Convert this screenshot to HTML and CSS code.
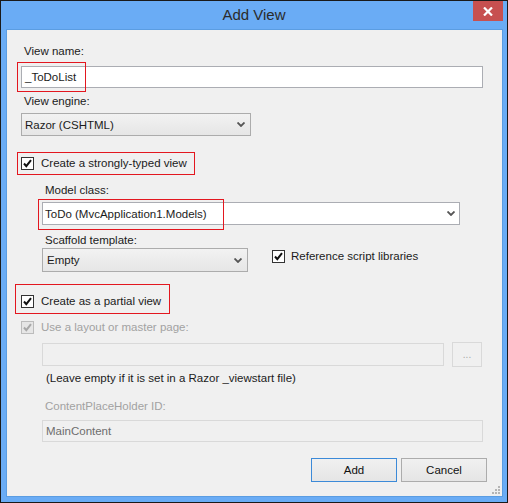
FILE: index.html
```html
<!DOCTYPE html>
<html lang="en">
<head>
  <meta charset="UTF-8">
  <title>Add View</title>
  <link rel="stylesheet" href="styles.css">
</head>
<body>

  <div class="window">
    <div class="titlebar">
      <span class="title">Add View</span>
      <span class="close">
        <svg width="10" height="9" viewBox="0 0 10 9"><path d="M1 0.5 L9 8.5 M9 0.5 L1 8.5" stroke="#fff" stroke-width="2.2"/></svg>
      </span>
    </div>

    <div class="panel">
      <div class="label label-first">View name:</div>
      <div class="field field-full field-white has-mark">
        <span class="value">_ToDoList</span>
        <span class="mark mark-name"></span>
      </div>

      <div class="label label-engine">View engine:</div>
      <div class="combo combo-engine">
        <span class="value">Razor (CSHTML)</span>
        <svg class="chev" width="8" height="5" viewBox="0 0 8 5"><path d="M0.5 0.5 L4 4 L7.5 0.5" fill="none" stroke="#555" stroke-width="1.8"/></svg>
      </div>

      <div class="boxed boxed-typed">
        <span class="check">
          <svg width="11" height="11" viewBox="0 0 11 11"><path d="M2 5.5 L4.3 8.2 L9 2.2" fill="none" stroke="#111" stroke-width="2"/></svg>
        </span>
        <span>Create a strongly-typed view</span>
      </div>

      <div class="indent">
        <div class="label label-model">Model class:</div>
        <div class="field field-white field-model has-mark">
          <span class="value value-model">ToDo (MvcApplication1.Models)</span>
          <svg class="chev" width="8" height="5" viewBox="0 0 8 5"><path d="M0.5 0.5 L4 4 L7.5 0.5" fill="none" stroke="#555" stroke-width="1.8"/></svg>
          <span class="mark mark-model"></span>
        </div>

        <div class="label label-scaffold">Scaffold template:</div>
        <div class="scaffold-row">
          <div class="combo combo-scaffold">
            <span class="value value-empty">Empty</span>
            <svg class="chev" width="8" height="5" viewBox="0 0 8 5"><path d="M0.5 0.5 L4 4 L7.5 0.5" fill="none" stroke="#555" stroke-width="1.8"/></svg>
          </div>
          <div class="check-row check-ref">
            <span class="check">
              <svg width="11" height="11" viewBox="0 0 11 11"><path d="M2 5.5 L4.3 8.2 L9 2.2" fill="none" stroke="#111" stroke-width="2"/></svg>
            </span>
            <span>Reference script libraries</span>
          </div>
        </div>
      </div>

      <div class="boxed boxed-partial">
        <span class="check">
          <svg width="11" height="11" viewBox="0 0 11 11"><path d="M2 5.5 L4.3 8.2 L9 2.2" fill="none" stroke="#111" stroke-width="2"/></svg>
        </span>
        <span>Create as a partial view</span>
      </div>

      <div class="check-row check-layout disabled">
        <span class="check check-disabled">
          <svg width="11" height="11" viewBox="0 0 11 11"><path d="M2 5.5 L4.3 8.2 L9 2.2" fill="none" stroke="#a8a8a8" stroke-width="2"/></svg>
        </span>
        <span>Use a layout or master page:</span>
      </div>

      <div class="indent">
        <div class="layout-row">
          <div class="field field-disabled field-layout"></div>
          <div class="browse">...</div>
        </div>
        <div class="label label-hint">(Leave empty if it is set in a Razor _viewstart file)</div>

        <div class="label label-placeholder disabled">ContentPlaceHolder ID:</div>
        <div class="field field-disabled field-main">
          <span class="value value-main">MainContent</span>
        </div>
      </div>

      <div class="buttons">
        <div class="btn btn-default">Add</div>
        <div class="btn">Cancel</div>
      </div>

      <svg class="grip" width="9" height="9" viewBox="0 0 9 9">
        <rect x="6" y="0" width="2" height="2" fill="#b5b5b5"/>
        <rect x="3" y="3" width="2" height="2" fill="#b5b5b5"/>
        <rect x="6" y="3" width="2" height="2" fill="#b5b5b5"/>
        <rect x="0" y="6" width="2" height="2" fill="#b5b5b5"/>
        <rect x="3" y="6" width="2" height="2" fill="#b5b5b5"/>
        <rect x="6" y="6" width="2" height="2" fill="#b5b5b5"/>
      </svg>
    </div>
  </div>

</body>
</html>
```

FILE: styles.css
```css
body {
  margin: 0;
  font-family: "Liberation Sans", Arial, sans-serif;
  font-size: 11.5px;
  color: #1b1b1b;
  background: #fff;
}

.window {
  width: 508px;
  height: 503px;
  box-sizing: border-box;
  border: 1px solid #1a1a1a;
  background: #6aacf5;
  display: flex;
  flex-direction: column;
}

.titlebar {
  height: 28px;
  position: relative;
  display: flex;
  align-items: center;
  justify-content: center;
}

.title {
  font-size: 15px;
  color: #2b2b2b;
  margin-top: -2px;
}

.close {
  position: absolute;
  top: 0;
  right: 4px;
  width: 30px;
  height: 20px;
  background: #c75050;
  display: flex;
  align-items: center;
  justify-content: center;
}

.panel {
  flex: 1;
  margin: 0 4px 5px 5px;
  border: 1px solid #5b9de2;
  background: #f0f0f0;
  padding: 0 19px 0 14px;
  position: relative;
}

.label {
  height: 16px;
  line-height: 16px;
  padding-left: 3px;
}

.label-first { margin-top: 13px; }
.label-engine { margin-top: 5px; }
.label-model { margin-top: 7px; }
.label-scaffold { margin-top: 7px; }
.label-hint { margin-top: 3px; padding-left: 4px; }
.label-placeholder { margin-top: 12px; }

.disabled {
  color: #a2a2a2;
}

.field, .combo {
  box-sizing: border-box;
  display: flex;
  align-items: center;
  position: relative;
}

.field-white {
  background: #fff;
  border: 1px solid #abadb3;
}

.field-full {
  margin-top: 7px;
  height: 22px;
  width: 462px;
  padding-left: 3px;
}

.combo {
  border: 1px solid #acacac;
  background: linear-gradient(#f2f2f2, #e6e6e6);
  padding-left: 3px;
}

.combo-engine {
  margin-top: 4px;
  width: 230px;
  height: 23px;
}

.chev {
  margin-left: auto;
  margin-right: 5px;
}

.indent {
  margin-left: 21px;
}

.field-model {
  margin-top: 4px;
  width: 418px;
  height: 23px;
  padding-left: 2px;
}

.field-model .chev {
  margin-right: 4px;
}

.scaffold-row {
  display: flex;
  align-items: flex-start;
}

.combo-scaffold {
  width: 206px;
  height: 24px;
  padding-left: 4px;
}

.check-ref {
  margin-left: 24px;
  margin-top: 2px;
}

.check-row {
  display: flex;
  align-items: center;
  gap: 6px;
  line-height: 13px;
}

.check {
  width: 13px;
  height: 13px;
  box-sizing: border-box;
  border: 1px solid #333;
  background: #fff;
  display: flex;
  align-items: center;
  justify-content: center;
  flex: none;
}

.check-disabled {
  border-color: #bcbcbc;
  background: #e6e6e6;
}

.check-layout {
  margin-top: 7px;
  gap: 7px;
}

/* red annotation boxes */
.boxed {
  display: flex;
  align-items: flex-start;
  gap: 7px;
  border: 1px solid #e3171f;
  line-height: 13px;
  width: max-content;
}

.boxed-typed {
  margin-top: 16px;
  margin-left: -4px;
  padding: 4px 7px 4px 3px;
}

.boxed-partial {
  margin-top: 12px;
  margin-left: -6px;
  padding: 10px 8px 5px 5px;
}

.mark {
  position: absolute;
  border: 1px solid #e3171f;
  box-sizing: border-box;
}

.mark-name {
  left: -5px;
  top: -5px;
  width: 69px;
  height: 30px;
}

.mark-model {
  left: -5px;
  top: -4px;
  width: 186px;
  height: 31px;
}

.layout-row {
  margin-top: 8px;
  display: flex;
  align-items: center;
  gap: 8px;
}

.field-disabled {
  border: 1px solid #d9d9d9;
  background: #f0f0f0;
}

.field-layout {
  width: 402px;
  height: 23px;
}

.browse {
  width: 30px;
  height: 25px;
  box-sizing: border-box;
  border: 1px solid #d9d9d9;
  color: #a8a8a8;
  font-size: 10px;
  display: flex;
  align-items: center;
  justify-content: center;
}

.field-main {
  margin-top: 6px;
  width: 441px;
  height: 22px;
  padding-left: 3px;
  color: #6d6d6d;
}

.buttons {
  margin-top: 16px;
  margin-right: -4px;
  display: flex;
  justify-content: flex-end;
  gap: 4px;
}

.btn {
  width: 86px;
  height: 24px;
  box-sizing: border-box;
  border: 1px solid #acacac;
  background: linear-gradient(#f0f0f0, #e5e5e5);
  display: flex;
  align-items: center;
  justify-content: center;
  color: #111;
}

.btn-default {
  border-color: #3c8ad8;
}

.grip {
  position: absolute;
  right: 1px;
  bottom: 1px;
}
```
